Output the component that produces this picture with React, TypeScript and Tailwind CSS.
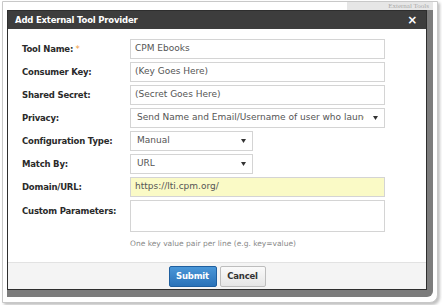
import React from "react";

const font = { fontFamily: '"DejaVu Sans", Verdana, sans-serif' };

function Arrow() {
  return (
    <svg width="5" height="4" viewBox="0 0 5 4" className="shrink-0">
      <path d="M0 0 H5 L2.5 4 Z" fill="#333" />
    </svg>
  );
}

function Row({ label, star, children, top }: { label: string; star?: boolean; children: React.ReactNode; top?: boolean }) {
  return (
    <div className={`flex ${top ? "items-start" : "items-center"}`}>
      <div className={`w-[108px] shrink-0 whitespace-nowrap text-[8.5px] tracking-[-0.2px] font-bold text-[#2a2a2a] ${top ? "pt-[5px]" : ""}`}>
        {label}
        {star && <span className="text-[#f0a040] font-normal"> *</span>}
      </div>
      {children}
    </div>
  );
}

function TextInput({ value, yellow }: { value: string; yellow?: boolean }) {
  return (
    <div
      className={`w-[255px] h-[20px] border border-[#d4d4d4] flex items-center pl-[4px] text-[9px] text-[#555] ${
        yellow ? "bg-[#fafac6]" : "bg-white"
      }`}
    >
      {value}
    </div>
  );
}

function Select({ value, w }: { value: string; w: string }) {
  return (
    <div className={`${w} h-[20px] border border-[#d4d4d4] bg-white flex items-center pl-[6px] pr-[6px] gap-[9px] text-[9px] text-[#555]`}>
      <span className="flex-1 overflow-hidden whitespace-nowrap">{value}</span>
      <Arrow />
    </div>
  );
}

export default function App() {
  return (
    <div className="w-[442px] h-[305px] bg-white overflow-hidden" style={font}>
      <div className="ml-[2px] mt-[1px] w-[436px] h-[302px] border border-[#c8c8c8] rounded-br-[8px] shadow-[2px_2px_3px_rgba(0,0,0,0.25)] flex flex-col bg-white">
        {/* top strip */}
        <div className="h-[8px] flex">
          <div className="flex-1" />
          <div className="w-[86px] mr-[4px] bg-[#e6e6e6] flex items-end justify-end pr-[4px]">
            <span className="text-[7px] leading-none text-[#aaa] whitespace-nowrap" style={{ fontFamily: '"Liberation Serif", serif' }}>
              External Tools
            </span>
          </div>
        </div>
        <div className="flex">
          <div className="ml-[4px] w-[420px] border border-[#2e2e2e] bg-white flex flex-col">
            {/* title */}
            <div className="h-[18px] bg-[#3d3d3d] flex items-center pl-[7px] pr-[9px] text-white text-[8.5px] tracking-[-0.2px] font-bold">
              <span className="flex-1">Add External Tool Provider</span>
              <span className="text-[12px] leading-none">×</span>
            </div>
            {/* body */}
            <div className="pt-[10px] pl-[14px] flex flex-col gap-[3px] h-[233px]">
              <Row label="Tool Name:" star>
                <TextInput value="CPM Ebooks" />
              </Row>
              <Row label="Consumer Key:">
                <TextInput value="(Key Goes Here)" />
              </Row>
              <Row label="Shared Secret:">
                <TextInput value="(Secret Goes Here)" />
              </Row>
              <Row label="Privacy:">
                <Select w="w-[255px]" value="Send Name and Email/Username of user who launches the tool" />
              </Row>
              <Row label="Configuration Type:">
                <Select w="w-[123px]" value="Manual" />
              </Row>
              <Row label="Match By:">
                <Select w="w-[123px]" value="URL" />
              </Row>
              <Row label="Domain/URL:">
                <TextInput value="https://lti.cpm.org/" yellow />
              </Row>
              <Row label="Custom Parameters:" top>
                <div className="w-[255px] h-[32px] border border-[#d4d4d4] bg-white" />
              </Row>
              <div className="pl-[108px] pt-[3px] text-[7.5px] text-[#888]">One key value pair per line (e.g. key=value)</div>
            </div>
            {/* footer */}
            <div className="h-[27px] border-t border-[#e2e2e2] bg-[#f4f4f4] flex items-center justify-center gap-[3px]">
              <div className="w-[48px] h-[21px] rounded-[2px] border border-[#1f5f9f] bg-gradient-to-b from-[#4a97d8] to-[#2a72b8] text-white text-[8.5px] tracking-[-0.2px] font-bold flex items-center justify-center">
                Submit
              </div>
              <div className="w-[46px] h-[21px] rounded-[2px] border border-[#bdbdbd] bg-gradient-to-b from-[#fafafa] to-[#e6e6e6] text-[#333] text-[8.5px] tracking-[-0.2px] font-bold flex items-center justify-center">
                Cancel
              </div>
            </div>
          </div>
          <div className="w-[6px] bg-[#7c7c7c]" />
        </div>
        <div className="ml-[4px] w-[426px] h-[7px] bg-[#7c7c7c] rounded-br-[6px]" />
      </div>
    </div>
  );
}
